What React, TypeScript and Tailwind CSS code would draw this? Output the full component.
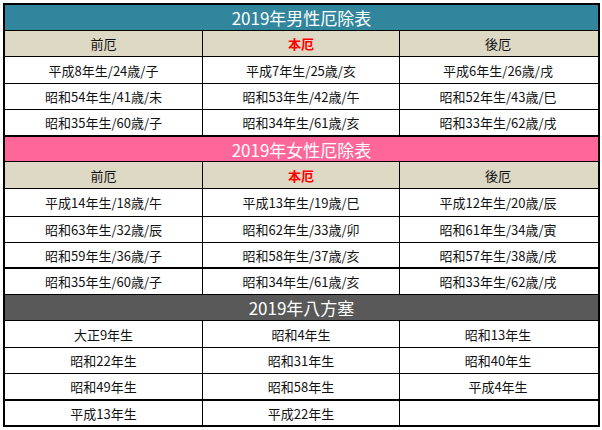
import * as React from "react"

type Row = { h: string; top: string; cells: string[] }

interface Section {
  title: string
  titleBg: string
  titleH: string
  titleTop: string
  header?: { h: string }
  rows: Row[]
}

// heights include the top border (border-box)
const sections: Section[] = [
  {
    title: "2019年男性厄除表",
    titleBg: "bg-[#31859c]",
    titleH: "h-[25px]",
    titleTop: "",
    header: { h: "h-[26px]" },
    rows: [
      { h: "h-[27px]", top: "border-t", cells: ["平成8年生/24歳/子", "平成7年生/25歳/亥", "平成6年生/26歳/戌"] },
      { h: "h-[26px]", top: "border-t", cells: ["昭和54年生/41歳/未", "昭和53年生/42歳/午", "昭和52年生/43歳/巳"] },
      { h: "h-[26px]", top: "border-t", cells: ["昭和35年生/60歳/子", "昭和34年生/61歳/亥", "昭和33年生/62歳/戌"] },
    ],
  },
  {
    title: "2019年女性厄除表",
    titleBg: "bg-[#ff6699]",
    titleH: "h-[26px]",
    titleTop: "border-t-2",
    header: { h: "h-[27px]" },
    rows: [
      { h: "h-[28px]", top: "border-t", cells: ["平成14年生/18歳/午", "平成13年生/19歳/巳", "平成12年生/20歳/辰"] },
      { h: "h-[26px]", top: "border-t", cells: ["昭和63年生/32歳/辰", "昭和62年生/33歳/卯", "昭和61年生/34歳/寅"] },
      { h: "h-[25px]", top: "border-t", cells: ["昭和59年生/36歳/子", "昭和58年生/37歳/亥", "昭和57年生/38歳/戌"] },
      { h: "h-[27px]", top: "border-t-2", cells: ["昭和35年生/60歳/子", "昭和34年生/61歳/亥", "昭和33年生/62歳/戌"] },
    ],
  },
  {
    title: "2019年八方塞",
    titleBg: "bg-[#595959]",
    titleH: "h-[26px]",
    titleTop: "border-t",
    rows: [
      { h: "h-[27px]", top: "border-t", cells: ["大正9年生", "昭和4年生", "昭和13年生"] },
      { h: "h-[26px]", top: "border-t", cells: ["昭和22年生", "昭和31年生", "昭和40年生"] },
      { h: "h-[26px]", top: "border-t", cells: ["昭和49年生", "昭和58年生", "平成4年生"] },
      { h: "h-[26px]", top: "border-t-2", cells: ["平成13年生", "平成22年生", ""] },
    ],
  },
]

function Cells({ cells, red }: { cells: string[]; red?: boolean }) {
  return (
    <>
      {cells.map((c, i) => (
        <div
          key={i}
          className={`flex w-[197px] items-center justify-center border-black ${i > 0 ? "border-l" : ""} ${
            red && i === 1 ? "font-bold text-[#ff0000]" : "text-[#111]"
          }`}
        >
          {c}
        </div>
      ))}
    </>
  )
}

export default function App() {
  return (
    <div className="min-h-screen bg-white pl-[3px] pt-[3px] font-['Noto_Sans_CJK_JP','Noto_Sans',sans-serif]">
      <div className="w-[597px] border-2 border-black text-[13px] leading-none">
        {sections.map((s) => (
          <div key={s.title}>
            <div
              className={`flex ${s.titleH} ${s.titleTop} items-center justify-center border-black ${s.titleBg} text-[17px] text-white`}
            >
              {s.title}
            </div>
            {s.header && (
              <div className={`flex ${s.header.h} border-t border-black bg-[#ddd9c4]`}>
                <Cells cells={["前厄", "本厄", "後厄"]} red />
              </div>
            )}
            {s.rows.map((r, i) => (
              <div key={i} className={`flex ${r.h} ${r.top} border-black`}>
                <Cells cells={r.cells} />
              </div>
            ))}
          </div>
        ))}
      </div>
    </div>
  )
}
